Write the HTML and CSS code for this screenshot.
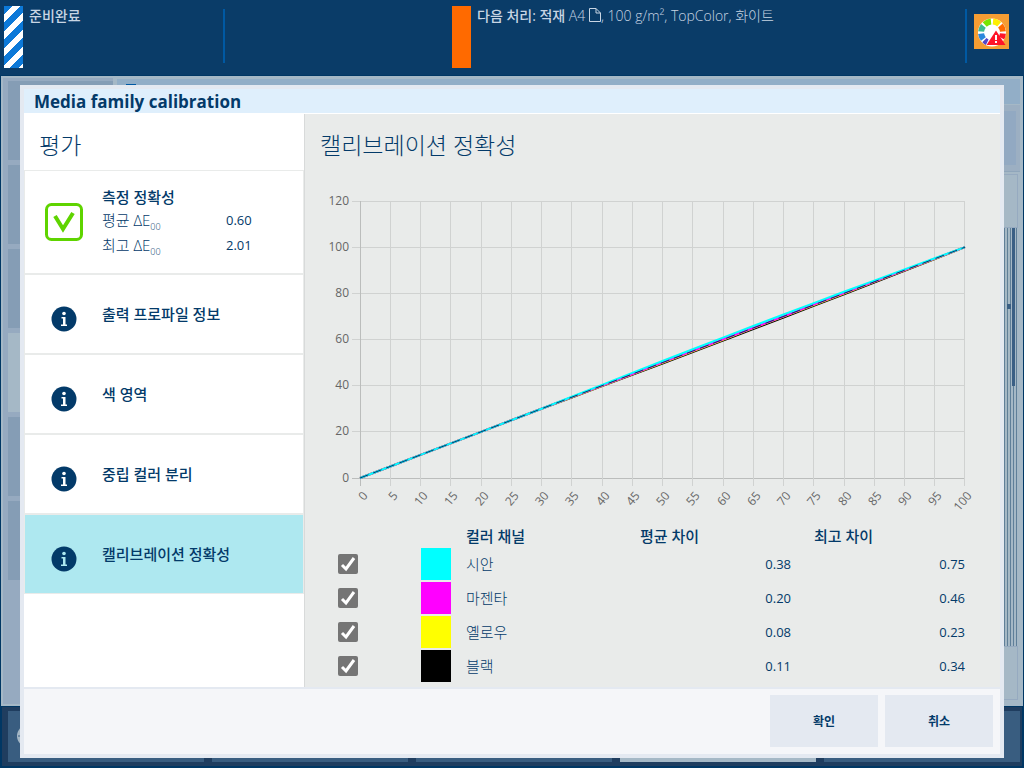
FILE: index.html
```
<!DOCTYPE html>
<html lang="ko">
<head>
  <meta charset="UTF-8" />
  <meta name="viewport" content="width=device-width, initial-scale=1.0" />
  <title>Media family calibration</title>
  <link rel="stylesheet" href="styles.css">
</head>
<body>
  <header class="topbar">
    <div class="status">
      <span class="flag striped"></span>
      <span class="status-text strong">준비완료</span>
    </div>
    <div></div>
    <div class="status next">
      <span class="flag orange"></span>
      <span class="status-text"><b>다음 처리: 적재</b> A4
        <svg class="page-icon" width="12" height="14" viewBox="0 0 12 14" fill="none" stroke="#c8d5e3"><path d="M.5.5h6.500l4.500 4.500v8.500H.5zM7 .5V5h4.500"/></svg>, 100 g/m², TopColor, 화이트</span>
    </div>
    <a class="alert" href="#" aria-label="Color warning">
      <svg width="35" height="35" viewBox="0 0 35 35">
        <circle cx="18" cy="18.500" r="14" fill="#fff"/>
        <g fill="none" stroke-width="6">
          <path d="M13.200 28.200A11 11 0 0 1 10.400 26.200" stroke="#5546c8"/>
          <path d="M9.400 25A11 11 0 0 1 7.100 19.600" stroke="#2b87dc"/>
          <path d="M7.100 17.500A11 11 0 0 1 9.400 11.800" stroke="#3dba90"/>
          <path d="M10.700 10.500A11 11 0 0 1 17 7.600" stroke="#78e600"/>
          <path d="M19 7.600A11 11 0 0 1 25.200 10.300" stroke="#ffee00"/>
          <path d="M26.400 11.500A11 11 0 0 1 28.900 17.500" stroke="#ff6a00"/>
          <path d="M28.900 19.500A11 11 0 0 1 27.500 24" stroke="#ff1428"/>
        </g>
        <path d="M22 16.500 31.500 31h-19z" fill="#ff1428"/>
        <path d="M21 21h2v5h-2zM21 27h2v2h-2z" fill="#fff"/>
      </svg>
    </a>
  </header>

  <main class="workspace" aria-hidden="true">
    <div class="tiles">
      <span class="tile"></span>
      <span class="tile"></span>
      <span class="tile"></span>
      <span class="tile current"></span>
      <span class="tile"></span>
      <span class="tile"></span>
    </div>
    <div class="tray">
      <div class="tray-head"><span class="tray-mark"></span></div>
      <div class="tray-tools"><span></span></div>
      <div class="scroll-end"></div>
      <div class="scroll-track"><span class="scroll-thumb"></span><span class="scroll-knob"></span></div>
      <div class="scroll-end"></div>
    </div>
  </main>

  <div class="bottombar" aria-hidden="true">
    <span class="dock">
      <svg width="22" height="22" viewBox="0 0 22 22"><circle cx="11" cy="11" r="11" fill="#a5b8c6"/><path d="M1 11h20M11 1v20" stroke="#395d80"/></svg>
    </span>
    <span class="dock"></span>
    <span class="dock"></span>
    <span class="dock current"></span>
    <span class="dock"></span>
  </div>

  <div class="dialog" role="dialog" aria-labelledby="dialogTitle">
    <h1 id="dialogTitle">Media family calibration</h1>

    <div class="dialog-body">
      <aside class="side">
        <h2>평가</h2>
        <ul class="steps">
          <li class="step result">
            <svg class="step-icon" width="38" height="38" viewBox="0 0 38 38" fill="none" stroke="#5fd400">
              <rect x="1.500" y="1.500" width="35" height="35" rx="5" stroke-width="3"/>
              <path d="M10 13l8 13L28 10" stroke-width="4"/>
            </svg>
            <div class="step-text">
              <strong>측정 정확성</strong>
              <dl>
                <dt>평균 ΔE<sub>00</sub></dt><dd>0.60</dd>
                <dt>최고 ΔE<sub>00</sub></dt><dd>2.01</dd>
              </dl>
            </div>
          </li>
          <li class="step">
            <svg class="step-icon" width="26" height="26" viewBox="0 0 26 26"><circle cx="13" cy="13" r="12.500" fill="#033a69"/><circle cx="13" cy="7.500" r="1.800" fill="#fff"/><path d="M10.500 11h4v7.500h1.500V20h-6v-1.500H12v-6h-1.500z" fill="#fff"/></svg>
            <a href="#">출력 프로파일 정보</a>
          </li>
          <li class="step">
            <svg class="step-icon" width="26" height="26" viewBox="0 0 26 26"><circle cx="13" cy="13" r="12.500" fill="#033a69"/><circle cx="13" cy="7.500" r="1.800" fill="#fff"/><path d="M10.500 11h4v7.500h1.500V20h-6v-1.500H12v-6h-1.500z" fill="#fff"/></svg>
            <a href="#">색 영역</a>
          </li>
          <li class="step">
            <svg class="step-icon" width="26" height="26" viewBox="0 0 26 26"><circle cx="13" cy="13" r="12.500" fill="#033a69"/><circle cx="13" cy="7.500" r="1.800" fill="#fff"/><path d="M10.500 11h4v7.500h1.500V20h-6v-1.500H12v-6h-1.500z" fill="#fff"/></svg>
            <a href="#">중립 컬러 분리</a>
          </li>
          <li class="step selected">
            <svg class="step-icon" width="26" height="26" viewBox="0 0 26 26"><circle cx="13" cy="13" r="12.500" fill="#033a69"/><circle cx="13" cy="7.500" r="1.800" fill="#aee8f0"/><path d="M10.500 11h4v7.500h1.500V20h-6v-1.500H12v-6h-1.500z" fill="#aee8f0"/></svg>
            <a href="#">캘리브레이션 정확성</a>
          </li>
        </ul>
      </aside>

      <section class="content">
        <h2>캘리브레이션 정확성</h2>
        <svg id="chart" class="chart" viewBox="0 0 660 336"></svg>
        <table class="channels">
          <colgroup>
            <col class="col-check"><col class="col-swatch"><col><col><col>
          </colgroup>
          <thead>
            <tr><td></td><td></td><th>컬러 채널</th><th>평균 차이</th><th>최고 차이</th></tr>
          </thead>
          <tbody>
            <tr>
              <td class="check"><input type="checkbox" id="cyan" checked></td>
              <td><span class="swatch cyan"></span></td>
              <td><label for="cyan">시안</label></td><td class="num">0.38</td><td class="num">0.75</td>
            </tr>
            <tr>
              <td class="check"><input type="checkbox" id="magenta" checked></td>
              <td><span class="swatch magenta"></span></td>
              <td><label for="magenta">마젠타</label></td><td class="num">0.20</td><td class="num">0.46</td>
            </tr>
            <tr>
              <td class="check"><input type="checkbox" id="yellow" checked></td>
              <td><span class="swatch yellow"></span></td>
              <td><label for="yellow">옐로우</label></td><td class="num">0.08</td><td class="num">0.23</td>
            </tr>
            <tr>
              <td class="check"><input type="checkbox" id="black" checked></td>
              <td><span class="swatch black"></span></td>
              <td><label for="black">블랙</label></td><td class="num">0.11</td><td class="num">0.34</td>
            </tr>
          </tbody>
        </table>
      </section>
    </div>

    <footer class="actions">
      <button type="button">확인</button>
      <button type="button">취소</button>
    </footer>
  </div>

  <script src="chart.js"></script>
</body>
</html>
```
FILE: styles.css
```
* {
  box-sizing: border-box;
}
body {
  margin: 0;
  min-height: 100vh;
  display: flex;
  flex-direction: column;
  background: #003764;
  color: #033a69;
  font-family: "Open Sans", "Noto Sans CJK KR", sans-serif;
  font-size: 15px;
}

/* top bar */
.topbar {
  display: grid;
  grid-template-columns: 221fr 227fr 515fr 42px;
  height: 76px;
  padding: 6px 15px 0 4px;
  background: #0a3c68;
  border-bottom: 1px solid #003764;
  color: #c8d5e3;
}
.status {
  display: flex;
  gap: 6px;
  height: 62px;
  background: linear-gradient(#0059a3, #0059a3) right 3px / 2px 54px no-repeat;
}
.flag {
  width: 19px;
  height: 62px;
}
.striped {
  background: repeating-linear-gradient(135deg, #0c79d8 0 6px, #fff 6px 12px);
}
.orange {
  background: #ff6a00;
}
.status-text {
  line-height: 20px;
  font-size: 14px;
  font-weight: 300;
}
.status-text b,
.strong {
  font-weight: 500;
}
.page-icon {
  vertical-align: -1px;
}
.alert {
  justify-self: end;
  width: 35px;
  height: 35px;
  margin-top: 8px;
  background: #f59d33;
}
.alert svg {
  display: block;
}

/* dimmed screen behind the dialog */
.workspace {
  flex: 1;
  display: grid;
  grid-template-columns: 110px 1fr;
  gap: 4px;
  margin: 0 1px;
  padding: 2px;
  background: #a5b8c6;
}
.tiles {
  display: flex;
  flex-direction: column;
  gap: 5px;
  padding: 3px 0 0 5px;
  background: #96aac0;
}
.tile {
  height: 79px;
  background: #859db5;
}
.tile.current {
  background: #a5b8c6;
}
.tray {
  display: flex;
  flex-direction: column;
  padding: 1px 1px 4px 0;
}
.tray-head {
  height: 26px;
  padding: 5px 9px;
  background: #92aec7;
  border-bottom: 1px solid #a5b8c6;
}
.tray-mark {
  display: block;
  width: 10px;
  height: 10px;
  background: #0059a3;
}
.tray-tools {
  height: 67px;
  margin-bottom: 2px;
  padding: 6px 4px;
  background: #9cafc2;
  border-bottom: 1px solid #8fa6bb;
}
.tray-tools span {
  display: block;
  height: 54px;
  background: #92a9c2;
}
.scroll-end {
  height: 54px;
  margin-right: 2px;
  border: 1px solid #96aac0;
}
.scroll-track {
  position: relative;
  flex: 1;
  align-self: flex-end;
  width: 16px;
  background: repeating-linear-gradient(90deg, #5f7f99 0 1px, #a5b8c6 1px 3px);
  background-size: 13px 100%;
  background-repeat: no-repeat;
}
.scroll-thumb {
  position: absolute;
  top: 0;
  right: 5px;
  width: 3px;
  height: 158px;
  background: #3a5f85;
}
.scroll-knob {
  position: absolute;
  top: 76px;
  right: 9px;
  width: 4px;
  height: 5px;
  background: #3a5f85;
}
.bottombar {
  display: grid;
  grid-template-columns: repeat(5, 1fr);
  gap: 8px;
  height: 59px;
  margin: 1px 2px 2px;
  padding: 4px 2px 4px 6px;
  background: #1f3d5f;
}
.dock {
  background: #395d80;
}
.dock.current {
  background: #a5b8c6;
}
.dock svg {
  display: block;
  margin: 14px 9px;
}

/* dialog */
.dialog {
  position: fixed;
  inset: 85px 20px 10px;
  display: flex;
  flex-direction: column;
  border: 4px solid #e4e9f1;
  background: #e9ebea;
}
h1 {
  margin: 0;
  padding: 1px 10px 0;
  background: #dfeffc;
  border-bottom: 1px solid #fff;
  font-size: 17px;
  font-weight: 700;
  line-height: 23px;
}
h2 {
  margin: 0;
  font-size: 23px;
  font-weight: 300;
  line-height: 32px;
}
.dialog-body {
  flex: 1;
  display: flex;
  min-height: 0;
}
.side {
  width: 281px;
  background: #fff;
  border-right: 1px solid #d8dada;
}
.side h2 {
  padding: 15px 15px 9px;
}
.steps {
  display: flex;
  flex-direction: column;
  gap: 2px;
  margin: 0;
  padding: 1px;
  background: #e9ebea;
  list-style: none;
}
.step {
  display: grid;
  grid-template-columns: 77px 1fr;
  align-items: center;
  height: 78px;
  background: #fff;
}
.step-icon {
  justify-self: center;
  margin-top: 10px;
}
.step a {
  padding-bottom: 2px;
  color: inherit;
  font-weight: 500;
  text-decoration: none;
}
.step.result {
  height: 102px;
}
.step.result .step-icon {
  margin-top: 0;
}
.step-text strong {
  display: block;
  font-weight: 500;
  line-height: 22px;
}
.step-text dl {
  display: grid;
  grid-template-columns: 124px 1fr;
  margin: 0;
  font-weight: 300;
  line-height: 25px;
}
.step-text dd {
  margin: 0;
  font-size: 13px;
  font-weight: 400;
}
sub {
  font-size: 9px;
  line-height: 0;
}
.step.selected {
  background: #aee8f0;
}
.content {
  flex: 1;
  padding: 15px 20px 0 15px;
}
.chart {
  display: block;
  width: 100%;
  margin-top: 28px;
}
.chart text {
  fill: #666;
  font-size: 12px;
}
.channels {
  width: 100%;
  table-layout: fixed;
  border-collapse: collapse;
}
.col-check {
  width: 101px;
}
.col-swatch {
  width: 37px;
}
.channels th,
.channels td {
  height: 34px;
  padding: 0 15px 0 8px;
  font-weight: 300;
  line-height: 20px;
  text-align: left;
}
.channels thead th,
.channels thead td {
  height: 22px;
  font-weight: 500;
}
.channels td:nth-child(2) {
  padding: 0;
}
.channels .check {
  padding: 0 18px;
}
.channels .num {
  font-size: 13px;
  font-weight: 400;
  text-align: right;
}
.check input {
  appearance: none;
  display: block;
  width: 20px;
  height: 20px;
  margin: 0;
  border-radius: 2px;
  background: #757575;
}
.check input:checked {
  background: #757575 url("data:image/svg+xml,%3Csvg xmlns='http://www.w3.org/2000/svg' viewBox='0 0 20 20'%3E%3Cpath d='M4 11l4 4 8-11' fill='none' stroke='white' stroke-width='3'/%3E%3C/svg%3E");
}
.swatch {
  display: block;
  width: 30px;
  height: 32px;
}
.cyan {
  background: #00ffff;
}
.magenta {
  background: #ff00ff;
}
.yellow {
  background: #ffff00;
}
.black {
  background: #000;
}
.actions {
  display: flex;
  justify-content: flex-end;
  gap: 7px;
  padding: 6px 7px 7px;
  background: #f5f6f9;
  border-top: 2px solid #e4e9f1;
}
.actions button {
  width: 108px;
  height: 52px;
  border: none;
  background: #e4e9f1;
  color: #033a69;
  font-family: inherit;
  font-size: 12px;
  font-weight: 700;
}
```
FILE: chart.js
```
const chart = document.getElementById('chart');
const left = 40, right = 645, top0 = 12, bottom = 289;

const px = v => left + v * (right - left) / 100;
const py = v => bottom - v * (bottom - top0) / 120;

function add(name, attrs, text) {
  const el = document.createElementNS('http://www.w3.org/2000/svg', name);
  for (const key in attrs) el.setAttribute(key, attrs[key]);
  if (text !== undefined) el.textContent = text;
  chart.appendChild(el);
}

// grid and axis labels
for (let v = 0; v <= 120; v += 20) {
  const y = Math.floor(py(v)) + 0.5;
  add('line', { x1: left - 8, x2: right, y1: y, y2: y, stroke: v ? '#d0d2d1' : '#bbbdbc' });
  add('text', { x: left - 11, y: y + 3, 'text-anchor': 'end' }, v);
}
for (let v = 0; v <= 100; v += 5) {
  const x = Math.min(Math.floor(px(v)), right - 1) + 0.5;
  add('line', { x1: x, x2: x, y1: top0, y2: bottom + 8, stroke: v ? '#d0d2d1' : '#bbbdbc' });
  add('text', { x: 0, y: 0, 'text-anchor': 'end', transform: `translate(${x + 8} ${bottom + 18}) rotate(-50)` }, v);
}

// deviation from the target, largest around 70%
const series = [
  { color: '#000000', peak: -0.5 },
  { color: '#ffff00', peak: -0.1 },
  { color: '#ff00ff', peak: 0.1 },
  { color: '#00ffff', peak: 0.85 }
];
series.forEach(s => {
  const points = [];
  for (let v = 0; v <= 100; v += 5) {
    const bump = v < 30 ? 0 : Math.sin((v - 30) / 70 * Math.PI);
    points.push(`${px(v)},${py(v + s.peak * bump)}`);
  }
  add('polyline', { points: points.join(' '), fill: 'none', stroke: s.color, 'stroke-width': 2 });
});
add('line', { x1: px(0), y1: py(0), x2: px(100), y2: py(100), stroke: '#033a69', 'stroke-width': 1, 'stroke-dasharray': '9 5' });
```
